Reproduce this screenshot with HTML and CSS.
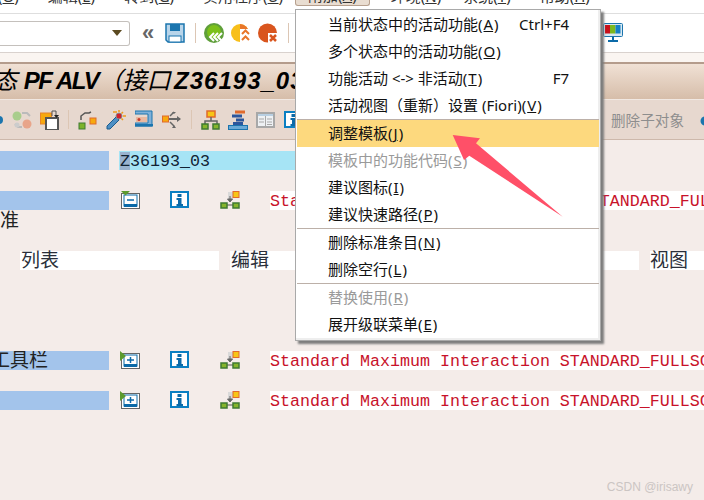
FILE: index.html
```html
<!DOCTYPE html>
<html lang="zh">
<head>
<meta charset="utf-8">
<title>PF ALV</title>
<link rel="stylesheet" href="styles.css">
</head>
<body>
<svg class="defs" width="0" height="0">
  <symbol id="i-info" viewBox="0 0 19 17"><rect x="1" y="1" width="17" height="15" fill="#fff" stroke="#0a7fc2" stroke-width="2"/><rect x="7.5" y="3" width="4" height="3" fill="#0b6aa8"/><path d="M6.5 7h5v6h1.5v2H6.500v-2H8V9H6.500z" fill="#0b6aa8"/></symbol>
  <symbol id="i-tree" viewBox="0 0 20 18"><rect x="8" y="1" width="5" height="8" fill="#d9d9d9"/><path d="M10 5v5M7.500 8l2.500 3 2.500-3z" fill="#666" stroke="#666"/><rect x="13" y="0.500" width="6" height="6" fill="#f7c516" stroke="#e06a2c"/><path d="M5 14h12" stroke="#555"/><rect x="1" y="12" width="6" height="5" fill="#86b52c" stroke="#3f7a32" stroke-width="1.500"/><rect x="13" y="12" width="6" height="5" fill="#86b52c" stroke="#3f7a32" stroke-width="1.500"/></symbol>
  <symbol id="i-plus" viewBox="0 0 20 18"><rect x="1.500" y="2.500" width="18" height="15" fill="#fff" stroke="#666"/><rect x="4" y="4" width="13" height="11" fill="#fff" stroke="#0b6aa8"/><rect x="4" y="13" width="13" height="3" fill="#0b6aa8"/><path d="M7 9h7M10.500 6v6" stroke="#0b6aa8" stroke-width="1.500"/><path d="M0 0l6 5-6 5z" fill="#5b9a2e"/></symbol>
</svg>

<div class="page">
  <nav class="menubar">
    <span class="mb-item mb-first">对象(<u>O</u>)</span>
    <span class="mb-item">编辑(<u>E</u>)</span>
    <span class="mb-item">转到(<u>G</u>)</span>
    <span class="mb-item">实用程序(<u>U</u>)</span>
    <span class="mb-item mb-active">附加(<u>A</u>)</span>
    <span class="mb-item">环境(<u>N</u>)</span>
    <span class="mb-item mb-sys">系统(<u>Y</u>)</span>
    <span class="mb-item">帮助(<u>H</u>)</span>
  </nav>

  <div class="systembar">
    <div class="cmd"><span class="cmd-arrow"></span></div>
    <span class="chev">«</span>
    <svg class="ic save" width="20" height="20" viewBox="0 0 20 20"><path d="M1 1h18v18H3l-2-2z" fill="#b9d5ea" stroke="#1b75ae" stroke-width="1.500"/><rect x="5" y="1" width="10" height="7" fill="#1b75ae"/><rect x="4" y="13" width="12" height="6" fill="#fff" stroke="#1b75ae"/></svg>
    <span class="sep sep-sys"></span>
    <svg class="ic" width="20" height="20" viewBox="0 0 20 20"><circle cx="10" cy="10" r="10" fill="#5f9f3a"/><circle cx="10" cy="9" r="7" fill="#7cc01a"/><path d="M10 10l-4 4 4 4M14 10l-4 4 4 4M18 10l-4 4 4 4" fill="none" stroke="#fff" stroke-width="2"/></svg>
    <svg class="ic" width="20" height="20" viewBox="0 0 20 20"><circle cx="9" cy="10" r="9" fill="#f8bf1a"/><path d="M9 1a9 9 0 0 1 9 9H9z" fill="#e8762a"/><rect x="9" y="6" width="11" height="14" fill="#fff"/><path d="M11 11l3.500-3.500L18 11M11 17l3.500-3.500L18 17" fill="none" stroke="#e8762a" stroke-width="2"/></svg>
    <svg class="ic" width="20" height="20" viewBox="0 0 20 20"><circle cx="9.500" cy="10" r="9.500" fill="#d9551e"/><rect x="10" y="10" width="10" height="10" fill="#fff"/><path d="M12 12l6 6M18 12l-6 6" stroke="#d9551e" stroke-width="2.500"/></svg>
    <span class="sep sep-sys2"></span>
    <svg class="ic monitor" width="20" height="20" viewBox="0 0 20 20"><rect x="0.500" y="0.500" width="19" height="13" rx="1" fill="#d8e8f2" stroke="#1b75ae"/><rect x="2" y="2" width="5" height="8.500" fill="#c8101a"/><rect x="7" y="2" width="5.500" height="8.500" fill="#7cb81e"/><rect x="12.500" y="2" width="5" height="8.500" fill="#1580c4"/><path d="M9 14h2v3H9z" fill="#0b6aa8"/><path d="M5 17h10v2H5z" fill="#0b6aa8"/></svg>
  </div>

  <header class="titlebar"><h1 class="title"><span class="t-cjk">态</span> <span class="t-pf">PF ALV</span><span class="t-cjk">（接口</span> <span class="t-code">Z36193_03</span></h1></header>

  <div class="apptools">
    <svg class="ic a0" width="4" height="10" viewBox="0 0 4 10"><circle cx="-1" cy="5" r="4" fill="#1b75ae"/></svg>
    <svg class="ic a1" width="20" height="20" viewBox="0 0 20 20"><path d="M10 3h5l3 3M3 14l3 3h4" fill="none" stroke="#bbb" stroke-width="2"/><circle cx="5" cy="6" r="4.500" fill="#a9cd8c"/><circle cx="5" cy="15" r="2.500" fill="#ccc"/><circle cx="15" cy="14" r="4.500" fill="#e8a58a"/></svg>
    <svg class="ic a2" width="19" height="20" viewBox="0 0 19 20"><rect x="0.500" y="3" width="11" height="11" fill="#f7a90e" stroke="#e8842a"/><rect x="6" y="8" width="12" height="12" fill="#fff" stroke="#555" stroke-width="2"/><path d="M12 6V1h4v6" fill="none" stroke="#555"/><path d="M14 5h5l-2.500 3z" fill="#222"/></svg>
    <span class="sep"></span>
    <svg class="ic a3" width="19" height="20" viewBox="0 0 19 20"><rect x="1" y="13" width="6" height="6" fill="#7cb32a" stroke="#3f7a32"/><rect x="12" y="8" width="6" height="6" fill="#f7a90e" stroke="#e06a2c"/><path d="M3 10V6l4-3h4l2-1" fill="none" stroke="#555" stroke-width="1.500"/></svg>
    <svg class="ic a4" width="20" height="20" viewBox="0 0 20 20"><path d="M1 19l-0-3L10 7l3 3-9 9z" fill="#4d8fc4" stroke="#1b5c8e"/><circle cx="13" cy="6" r="3" fill="#d21f2c" stroke="#8a8a8a"/><path d="M13 0v2M17 2l-1.500 1.500M20 6h-3M7 2h4M17 10l-1.500-1.500" stroke="#f09a1a" stroke-width="1.500"/></svg>
    <svg class="ic a5" width="18" height="20" viewBox="0 0 18 20"><path d="M0 1h17v15H0v-3h13V4H0z" fill="#7fb0d8" stroke="#1b75ae"/><rect x="1" y="7" width="11" height="5" fill="#e9b9a0"/><circle cx="4" cy="9.500" r="1.500" fill="#c8392a"/><rect x="0" y="14" width="18" height="2.500" fill="#1b75ae"/></svg>
    <svg class="ic a6" width="20" height="20" viewBox="0 0 20 20"><rect x="0.500" y="6" width="6" height="6" fill="#f7a90e" stroke="#e06a2c"/><path d="M7 9h11" stroke="#666" stroke-width="2"/><path d="M15 6l4 3-4 3z" fill="#666"/><path d="M8 6l4-4M8 12l4 4" stroke="#666" stroke-width="1.500"/><path d="M10 2h4l-2 2zM10 18h4l-2-3z" fill="#666"/></svg>
    <span class="sep"></span>
    <svg class="ic a7" width="19" height="20" viewBox="0 0 19 20"><rect x="6" y="1" width="8" height="6" fill="#f7c516" stroke="#e06a2c" stroke-width="1.500"/><path d="M10 7v4M4 15v-4h12v4" fill="none" stroke="#666" stroke-width="1.500"/><rect x="1" y="14" width="6" height="5" fill="#86b52c" stroke="#3f7a32" stroke-width="1.500"/><rect x="12" y="14" width="6" height="5" fill="#86b52c" stroke="#3f7a32" stroke-width="1.500"/></svg>
    <svg class="ic a8" width="20" height="20" viewBox="0 0 20 20"><rect x="7" y="0.500" width="10" height="3" fill="#e06a2c"/><rect x="4" y="4.500" width="10" height="3" fill="#2c569c"/><rect x="8" y="8.500" width="8" height="3" fill="#2c569c"/><rect x="5" y="12" width="10" height="3" fill="#2c569c"/><rect x="0.500" y="15.500" width="19" height="4" fill="#6aa9d6" stroke="#1b75ae"/></svg>
    <svg class="ic a9" width="19" height="16" viewBox="0 0 19 16"><rect x="1" y="1" width="17" height="14" fill="#eef1f4" stroke="#a8a8a8" stroke-width="2"/><rect x="2" y="2" width="15" height="2" fill="#b8cfe2"/><path d="M9.500 4v10" stroke="#a8a8a8"/><path d="M3 7h5M3 10h5M11 7h5M11 10h5M11 12.500h5" stroke="#a8a8a8"/></svg>
    <svg class="ic a10" width="19" height="17" viewBox="0 0 19 17"><use href="#i-info"/></svg>
    <span class="tool-text">删除子对象</span>
    <svg class="ic a11" width="14" height="20" viewBox="0 0 14 20"><path d="M5 2l3 6h-3z" fill="#c8392a"/><circle cx="6" cy="11" r="4.500" fill="#1b75ae"/></svg>
  </div>

  <main class="content">
    <div class="row">
      <span class="label"></span>
      <span class="input-cell"><span class="sel">Z</span>36193_03</span>
    </div>
    <div class="row row-gap">
      <span class="label"></span>
      <svg class="cell-icon" width="20" height="18" viewBox="0 0 20 18"><rect x="1.500" y="2.500" width="18" height="15" fill="#fff" stroke="#666"/><rect x="4" y="4" width="13" height="11" fill="#fff" stroke="#0b6aa8"/><rect x="4" y="13" width="13" height="3" fill="#0b6aa8"/><path d="M7 9h7" stroke="#0b6aa8" stroke-width="1.500"/><path d="M1 0h9L5.500 4.500z" fill="#5b9a2e"/></svg>
      <svg class="cell-info" width="19" height="17"><use href="#i-info"/></svg>
      <svg class="cell-tree" width="20" height="18"><use href="#i-tree"/></svg>
      <span class="code">Standard Maximum Interaction    STANDARD_FULLSCREEN</span>
    </div>
    <div class="wrapline">准</div>
    <div class="row row-menu">
      <span class="tab tab-list">列表</span>
      <span class="tab tab-edit">编辑</span>
      <span class="tab tab-view">视图</span>
    </div>
    <div class="row row-far">
      <span class="label label-cut"><span>工具栏</span></span>
      <svg class="cell-icon" width="20" height="18"><use href="#i-plus"/></svg>
      <svg class="cell-info" width="19" height="17"><use href="#i-info"/></svg>
      <svg class="cell-tree" width="20" height="18"><use href="#i-tree"/></svg>
      <span class="code">Standard Maximum Interaction STANDARD_FULLSCREEN</span>
    </div>
    <div class="row row-gap">
      <span class="label"></span>
      <svg class="cell-icon" width="20" height="18"><use href="#i-plus"/></svg>
      <svg class="cell-info" width="19" height="17"><use href="#i-info"/></svg>
      <svg class="cell-tree" width="20" height="18"><use href="#i-tree"/></svg>
      <span class="code">Standard Maximum Interaction STANDARD_FULLSCREEN</span>
    </div>
  </main>

  <ul class="menu">
    <li class="mi"><span>当前状态中的活动功能(<u>A</u>)</span><span>Ctrl+F4</span></li>
    <li class="mi"><span>多个状态中的活动功能(<u>O</u>)</span></li>
    <li class="mi"><span>功能活动 &lt;-&gt; 非活动(<u>T</u>)</span><span>F7</span></li>
    <li class="mi"><span>活动视图（重新）设置 (Fiori)(<u>V</u>)</span></li>
    <li class="msep"></li>
    <li class="mi mi-hot"><span>调整模板(<u>J</u>)</span></li>
    <li class="mi mi-off"><span>模板中的功能代码(<u>S</u>)</span></li>
    <li class="mi"><span>建议图标(<u>I</u>)</span></li>
    <li class="mi"><span>建议快速路径(<u>P</u>)</span></li>
    <li class="msep"></li>
    <li class="mi"><span>删除标准条目(<u>N</u>)</span></li>
    <li class="mi"><span>删除空行(<u>L</u>)</span></li>
    <li class="msep"></li>
    <li class="mi mi-off"><span>替换使用(<u>R</u>)</span></li>
    <li class="mi"><span>展开级联菜单(<u>E</u>)</span></li>
  </ul>

  <svg class="arrow" width="704" height="500" viewBox="0 0 704 500"><polygon points="452.700,135 480,138.300 476,143.300 562.700,216.700 469.300,155.700 464,160" fill="#ff5068"/></svg>

  <div class="watermark">CSDN @irisawy</div>
</div>
</body>
</html>
```

FILE: styles.css
```css
* { box-sizing: border-box; }
html, body { margin: 0; padding: 0; }
.defs { position: absolute; }
.page {
  position: relative;
  width: 704px;
  height: 500px;
  overflow: hidden;
  background: #f4ece9;
  font-family: "Noto Sans", "Noto Sans CJK SC", sans-serif;
  color: #111;
}
.ic { display: block; flex: none; }

/* menu bar */
.menubar {
  display: flex;
  gap: 29px;
  height: 13px;
  overflow: hidden;
  background: #fff;
  font-size: 15px;
  line-height: 20px;
  color: #333;
}
.mb-item {
  display: flex;
  flex: none;
  align-items: flex-end;
  height: 6px;
  white-space: pre;
}
.mb-first { margin-left: -32px; }
.mb-active {
  margin: 0 -8px 0 -17px;
  padding: 0 12px;
  background: #e9ddd1;
  border: 1px solid #b7a08e;
  border-top: 0;
  border-radius: 0 0 3px 3px;
}
.mb-sys { margin-left: -7px; }

/* system toolbar */
.systembar {
  display: flex;
  align-items: center;
  height: 49px;
  padding-bottom: 10px;
  background: linear-gradient(#fff 0, #fff 38px, #d9d2ce 38px, #d9d2ce 39px, #faf5f1 39px);
  border-top: 1px solid #dedede;
}
.cmd {
  display: flex;
  align-items: center;
  justify-content: flex-end;
  width: 130px;
  height: 25px;
  padding-right: 7px;
  background: #fff;
  border: 1px solid #c4c0bc;
  border-left: 0;
  border-radius: 0 3px 3px 0;
}
.cmd-arrow {
  width: 0;
  height: 0;
  border-top: 6px solid #5b4a20;
  border-left: 5px solid transparent;
  border-right: 5px solid transparent;
}
.chev {
  width: 14px;
  margin-left: 12px;
  font: bold 22px/20px "Liberation Sans", sans-serif;
  color: #666;
}
.save { margin-left: 9px; }
.systembar .ic + .ic { margin-left: 7px; }
.sep {
  flex: none;
  width: 1px;
  height: 20px;
  background: #dcc6b4;
}
.sep-sys { margin: 0 8px 0 10px; }
.sep-sys2 { margin-left: 10px; }
.monitor { margin-left: 314px; }

/* title bar */
.titlebar {
  height: 38px;
  overflow: hidden;
  background: linear-gradient(#f0e1d5, #d6bda9);
  border-top: 2px solid #b49c8c;
  border-bottom: 1px solid #f1e8e2;
}
.title {
  margin: 0 0 0 -7px;
  font: italic bold 24px/33px "Liberation Sans", "Noto Sans CJK SC", sans-serif;
  color: #000;
  white-space: pre;
}
.t-cjk { font-weight: 400; }
.t-pf { letter-spacing: -1.400px; }
.t-code { margin-left: -3px; letter-spacing: 1px; }

/* application toolbar */
.apptools {
  display: flex;
  align-items: center;
  height: 40px;
  background: #e7d8cf;
  border-bottom: 1px solid #cdb8ab;
}
.a1 { margin-left: 8px; }
.a2 { margin-left: 8px; }
.apptools .sep { margin: 0 9px; height: 19px; }
.a4 { margin-left: 9px; }
.a5 { margin-left: 9px; }
.a6 { margin-left: 9px; }
.a8 { margin-left: 8px; }
.a9 { margin-left: 8px; }
.a10 { margin-left: 9px; }
.tool-text {
  margin-left: 308px;
  font-size: 14.600px;
  color: #8e8e8e;
  white-space: pre;
}
.a11 { margin-left: 15px; }

/* content */
.content {
  padding-top: 11px;
  font: 16.670px/21px "Liberation Mono", "Noto Sans CJK SC", monospace;
}
.row {
  display: flex;
  align-items: flex-start;
  height: 19px;
  white-space: pre;
}
.row-gap { margin-top: 21px; }
.row-menu { margin-top: 21px; }
.row-far { margin-top: 81px; }
.label {
  flex: none;
  width: 109px;
  height: 19px;
  background: #a3c4eb;
  overflow: hidden;
}
.label-cut span {
  display: block;
  margin-left: -9px;
  font: 19px/16px "Noto Sans CJK SC", sans-serif;
  color: #222;
}
.input-cell {
  flex: none;
  width: 300px;
  height: 19px;
  margin-left: 10px;
  padding-left: 1px;
  overflow: hidden;
  background: #a6e4f5;
  color: #123;
}
.sel { background: #9ab2cf; }
.cell-icon { flex: none; margin-left: 11px; }
.cell-info { flex: none; margin-left: 30px; }
.cell-tree { flex: none; margin-left: 31px; }
.code {
  flex: 1;
  height: 19px;
  margin-left: 30px;
  background: #fff;
  color: #c8122a;
  overflow: hidden;
}
.wrapline {
  height: 20px;
  font: 19px/18px "Noto Sans CJK SC", sans-serif;
  color: #222;
}
.tab {
  flex: none;
  height: 19px;
  background: #fff;
  font: 19px/16px "Noto Sans CJK SC", sans-serif;
  color: #2a2f3a;
}
.tab-list { width: 199px; margin-left: 20px; padding-left: 1px; }
.tab-edit { width: 409px; margin-left: 11px; padding-left: 1px; }
.tab-view { width: 54px; margin-left: 11px; }

/* popup menu */
.menu {
  position: absolute;
  left: 295px;
  top: 9px;
  width: 306px;
  height: 332px;
  margin: 0;
  padding: 1px;
  list-style: none;
  background: #fff;
  border: 1px solid #a9a9a9;
  box-shadow: inset -2px -2px 0 #eee, 3px 3px 2px #7d7d7d;
  font-size: 15px;
  color: #111;
}
.mi {
  display: flex;
  justify-content: space-between;
  align-items: center;
  height: 27px;
  padding: 0 30px 0 31px;
  white-space: pre;
  line-height: 27px;
}
.mi u { padding: 0 1px; }
.mi-hot { background: #fdd97e; }
.mi-off { color: #9a9a9a; }
.msep { height: 1px; background: #bcb0a8; }

.arrow { position: absolute; left: 0; top: 0; pointer-events: none; }
.watermark {
  position: absolute;
  right: 11px;
  bottom: 6px;
  font: 12px/14px "Liberation Sans", sans-serif;
  color: #cbc5c3;
}
```
